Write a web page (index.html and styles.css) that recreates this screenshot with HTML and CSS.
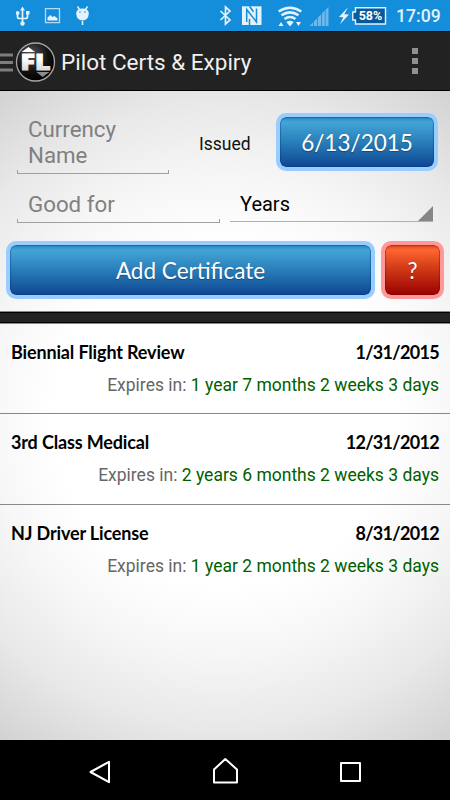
FILE: index.html
```html
<!DOCTYPE html>
<html lang="en">
<head>
    <meta charset="UTF-8">
    <meta name="viewport" content="width=device-width, initial-scale=1.0">
    <title>Pilot Certs &amp; Expiry</title>
    <link rel="stylesheet" href="styles.css">
</head>
<body>

    <div class="status-bar">
        <svg class="status-icons" width="100" height="31" viewBox="0 0 100 31">
            <!-- usb -->
            <g fill="none" stroke="#e4f2fc" stroke-width="1.700">
                <path d="M22.500 9v14M17.500 13v3.500q0 2 2 2h6q2 0 2-2V13"/>
            </g>
            <g fill="#e4f2fc">
                <path d="M22.500 6.500l2.500 4h-5zM26 11h3.500v3.500H26z"/>
                <circle cx="17.700" cy="13" r="1.900"/>
                <circle cx="22.500" cy="23.500" r="2.200"/>
            </g>
            <!-- picture -->
            <path d="M45.500 8.700h14v14h-14z" fill="none" stroke="#b5daf5" stroke-width="1.300"/>
            <path d="M47.500 20.500v-3l3-2.500 2 2 2-1 3 2.500v2z" fill="#e4f2fc"/>
            <!-- android -->
            <path d="M76.300 12.500q1-4 6.200-4t6.200 4v2q-.5 5.500-6.200 6-5.700-.5-6.200-6z" fill="#e4f2fc"/>
            <path d="M77.500 6.500l2 3M87.500 6.500l-2 3M82.500 21v4" stroke="#e4f2fc" stroke-width="1.500"/>
            <circle cx="80" cy="12" r=".8" fill="#148dda"/>
            <circle cx="85" cy="12" r=".8" fill="#148dda"/>
        </svg>
        <div class="status-right">
            <svg width="132" height="31" viewBox="218 0 132 31">
                <!-- bluetooth -->
                <path d="M220.500 11l9.500 9-4.500 4V7l4.500 4-9.500 9" fill="none" stroke="#e4f2fc" stroke-width="1.700"/>
                <!-- nfc -->
                <path d="M242 6.300h19.500V25H242z" fill="#e4f2fc"/>
                <path d="M246.700 22V9.500l9.800 12.500V8.500M249.500 6.300l4 5.500M249.500 25v-6" fill="none" stroke="#148dda" stroke-width="1.500"/>
                <!-- wifi -->
                <g fill="none" stroke="#e4f2fc" stroke-width="2.600">
                    <path d="M278.700 11.500q11.300-7.500 22.600 0M281.500 15.300q8.500-6 17 0M284.500 19q5.500-4 11 0"/>
                </g>
                <path d="M286.300 22q3.700-2.500 7.400 0L290 26.500zM278.500 26l2.500-4 2.500 4zM296 22h5l-2.500 4z" fill="#e4f2fc"/>
                <!-- signal -->
                <g fill="#6cb8ea">
                    <path d="M309.500 26l3.500-3.500V26zM313.800 21.500l3.200-3V26h-3.200zM317.800 17.500l3.200-3V26h-3.200zM321.800 13.500l3-3V26h-3zM325.500 10l3-3v19h-3z"/>
                </g>
                <!-- charging -->
                <path d="M348 7.300l-9 9.700 4.300.3-3.300 7 9-9.700-4.700-.3z" fill="#e4f2fc"/>
            </svg>
            <svg width="37" height="31" viewBox="350 0 37 31">
                <path d="M355.500 7.700H385.500V24H355.500V20H352.800V12H355.500z" fill="#07599c" stroke="#e4f2fc" stroke-width="1.400"/>
                <text class="battery-text" x="370.500" y="20" text-anchor="middle">58%</text>
            </svg>
            <span class="clock">17:09</span>
        </div>
    </div>

    <header class="action-bar">
        <svg width="57" height="59" viewBox="0 31 57 59">
            <defs>
                <radialGradient id="disc" cx="40%" cy="30%" r="70%">
                    <stop offset="0" stop-color="#555"/>
                    <stop offset=".6" stop-color="#141414"/>
                    <stop offset="1" stop-color="#000"/>
                </radialGradient>
                <linearGradient id="letters" x1="0" y1="0" x2="0" y2="1">
                    <stop offset=".4" stop-color="#fff"/>
                    <stop offset="1" stop-color="#c4c4c4"/>
                </linearGradient>
            </defs>
            <path d="M0 54h13M0 61.500h13M0 69h13" stroke="#7d7d7d" stroke-width="3"/>
            <circle cx="35.500" cy="61" r="19" fill="url(#disc)" stroke="#a5a5a5" stroke-width="1.300"/>
            <path d="M21.500 51l7-5 6.500 5z" fill="#fff"/>
            <path d="M36.500 71h13l-7 5z" fill="#8c8c8c"/>
            <text class="logo-text" x="20.500" y="69" textLength="30" lengthAdjust="spacingAndGlyphs" fill="url(#letters)" stroke="url(#letters)">FL</text>
        </svg>
        <h1>Pilot Certs &amp; Expiry</h1>
        <div class="overflow-menu">
            <span></span>
            <span></span>
            <span></span>
        </div>
    </header>

    <main class="content">
        <section class="cert-form">
            <div class="form-row name-row">
                <div class="field name-field">Currency<br>Name</div>
                <span class="issued">Issued</span>
                <button class="btn date-btn">6/13/2015</button>
            </div>
            <div class="form-row period-row">
                <div class="field period-field">Good for</div>
                <div class="spinner">
                    <span>Years</span>
                    <svg width="15" height="15" viewBox="0 0 15 15"><path d="M15 0v15H0z" fill="#858585"/></svg>
                </div>
            </div>
            <div class="form-row button-row">
                <button class="btn add-btn">Add Certificate</button>
                <button class="btn help-btn">?</button>
            </div>
        </section>

        <div class="divider"></div>

        <ul class="cert-list">
            <li class="cert">
                <div class="cert-head"><span>Biennial Flight Review</span><span class="cert-date">1/31/2015</span></div>
                <div class="expires">Expires in: <span class="time-left">1 year 7 months 2 weeks 3 days</span></div>
            </li>
            <li class="cert">
                <div class="cert-head"><span>3rd Class Medical</span><span class="cert-date">12/31/2012</span></div>
                <div class="expires">Expires in: <span class="time-left">2 years 6 months 2 weeks 3 days</span></div>
            </li>
            <li class="cert">
                <div class="cert-head"><span>NJ Driver License</span><span class="cert-date">8/31/2012</span></div>
                <div class="expires">Expires in: <span class="time-left">1 year 2 months 2 weeks 3 days</span></div>
            </li>
        </ul>
    </main>

    <nav class="nav-bar">
        <svg width="450" height="60" viewBox="0 740 450 60" fill="none" stroke="#fff" stroke-width="2">
            <path d="M109 761.800v20.400L90.500 772z" stroke-linejoin="round"/>
            <path d="M214 782.500v-13l11.300-10.500 11.700 10.500v13z" stroke-linejoin="round"/>
            <path d="M341 763h19v18h-19z" stroke-linejoin="round"/>
        </svg>
    </nav>

</body>
</html>
```

FILE: styles.css
```css
* {
    box-sizing: border-box;
}

body {
    font-family: Roboto, sans-serif;
    background: #000;
    display: flex;
    flex-direction: column;
    width: 450px;
    height: 800px;
    margin: 0;
    overflow: hidden;
}

svg {
    display: block;
    flex: none;
}

.status-bar {
    display: flex;
    justify-content: space-between;
    height: 31px;
    background: #148dda;
}

.status-right {
    display: flex;
    width: 232px;
}

.battery-text {
    font-size: 12.5px;
    font-weight: bold;
    fill: #fff;
}

.clock {
    margin-left: 9px;
    font-size: 17.6px;
    font-weight: 500;
    line-height: 32px;
    color: #e4f2fc;
}

.action-bar {
    display: flex;
    align-items: center;
    height: 60px;
    background: #222;
    border-top: 1px solid #111;
    border-bottom: 1px solid #000;
}

.logo-text {
    font-family: "Open Sans", sans-serif;
    font-size: 22.5px;
    font-weight: 800;
    stroke-width: 1px;
}

h1 {
    margin: 1px 0 0 4px;
    font-size: 22.5px;
    font-weight: normal;
    color: #f0f0f0;
}

.overflow-menu {
    display: flex;
    flex-direction: column;
    gap: 4px;
    margin-left: auto;
    margin-right: 32px;
}

.overflow-menu span {
    width: 6px;
    height: 6px;
    background: #919191;
}

.content {
    display: flex;
    flex-direction: column;
    height: 649px;
    background: radial-gradient(circle at 50% 50%, #fff 0, #fff 170px, #f7f7f7 235px, #e8e8e8 315px, #d2d2d2 395px);
}

.cert-form {
    height: 221px;
    padding: 22px 6px 0;
}

.form-row {
    display: flex;
}

.name-row {
    height: 61px;
    padding-left: 11px;
}

.field {
    padding-left: 10px;
    font-size: 22.3px;
    line-height: 26px;
    color: #808080;
    border: 1px solid #a0a0a0;
    border-top: none;
    border-image: linear-gradient(to top, #a0a0a0 4px, transparent 4px) 1;
}

.name-field {
    width: 152px;
    height: 61px;
    padding-top: 3px;
}

.issued {
    width: 77px;
    margin-left: 30px;
    font-size: 17.5px;
    line-height: 62px;
    color: #111;
}

.btn {
    padding: 0;
    height: 58px;
    border: 4px solid #99ccff;
    border-radius: 10px;
    background: linear-gradient(#2586bb, #43a5d7 5px, #2c83bd 45%, #0e4692) padding-box;
    box-shadow: inset 0 0 1px 1px rgba(0, 55, 130, 0.4);
    font-family: Lato, sans-serif;
    font-size: 22.5px;
    color: #fff;
    text-shadow: 0 1px 1px rgba(0, 0, 0, 0.3);
}

.date-btn {
    width: 162px;
}

.period-row {
    height: 67px;
    padding: 13px 11px 0;
    gap: 10px;
}

.period-field {
    width: 203px;
    height: 36px;
    padding-top: 4px;
}

.spinner {
    display: flex;
    justify-content: space-between;
    align-items: flex-end;
    width: 203px;
    height: 35px;
    padding-left: 10px;
    border-bottom: 1px solid #b0b0b0;
    font-size: 20px;
    line-height: 33px;
    color: #000;
}

.button-row {
    gap: 6px;
}

.add-btn {
    width: 369px;
}

.help-btn {
    width: 63px;
    border-color: #ff9999;
    background: linear-gradient(#d5481e, #ff6531 5px, #d23d18 45%, #990000) padding-box;
    box-shadow: inset 0 0 1px 1px rgba(130, 0, 0, 0.4);
}

.divider {
    height: 11px;
    background: #222;
    border-top: 1px solid #000;
    border-bottom: 1px solid #000;
    box-shadow: 0 0 0 1px #888;
}

.cert-list {
    margin: 0;
    padding: 0;
    list-style: none;
}

.cert {
    height: 90.8px;
    padding: 16.6px 11px 0;
    border-bottom: 1px solid #888;
}

.cert:last-child {
    border-bottom: none;
}

.cert-head {
    display: flex;
    justify-content: space-between;
    font-family: Lato, sans-serif;
    font-size: 18px;
    font-weight: bold;
    line-height: 24px;
    letter-spacing: -0.15px;
    color: #000;
}

.cert-date {
    letter-spacing: -0.7px;
}

.expires {
    margin-top: 9px;
    font-size: 17.5px;
    line-height: 24px;
    text-align: right;
    color: #666;
}

.time-left {
    color: #005f00;
}

.nav-bar {
    height: 60px;
    background: #000;
}
```
